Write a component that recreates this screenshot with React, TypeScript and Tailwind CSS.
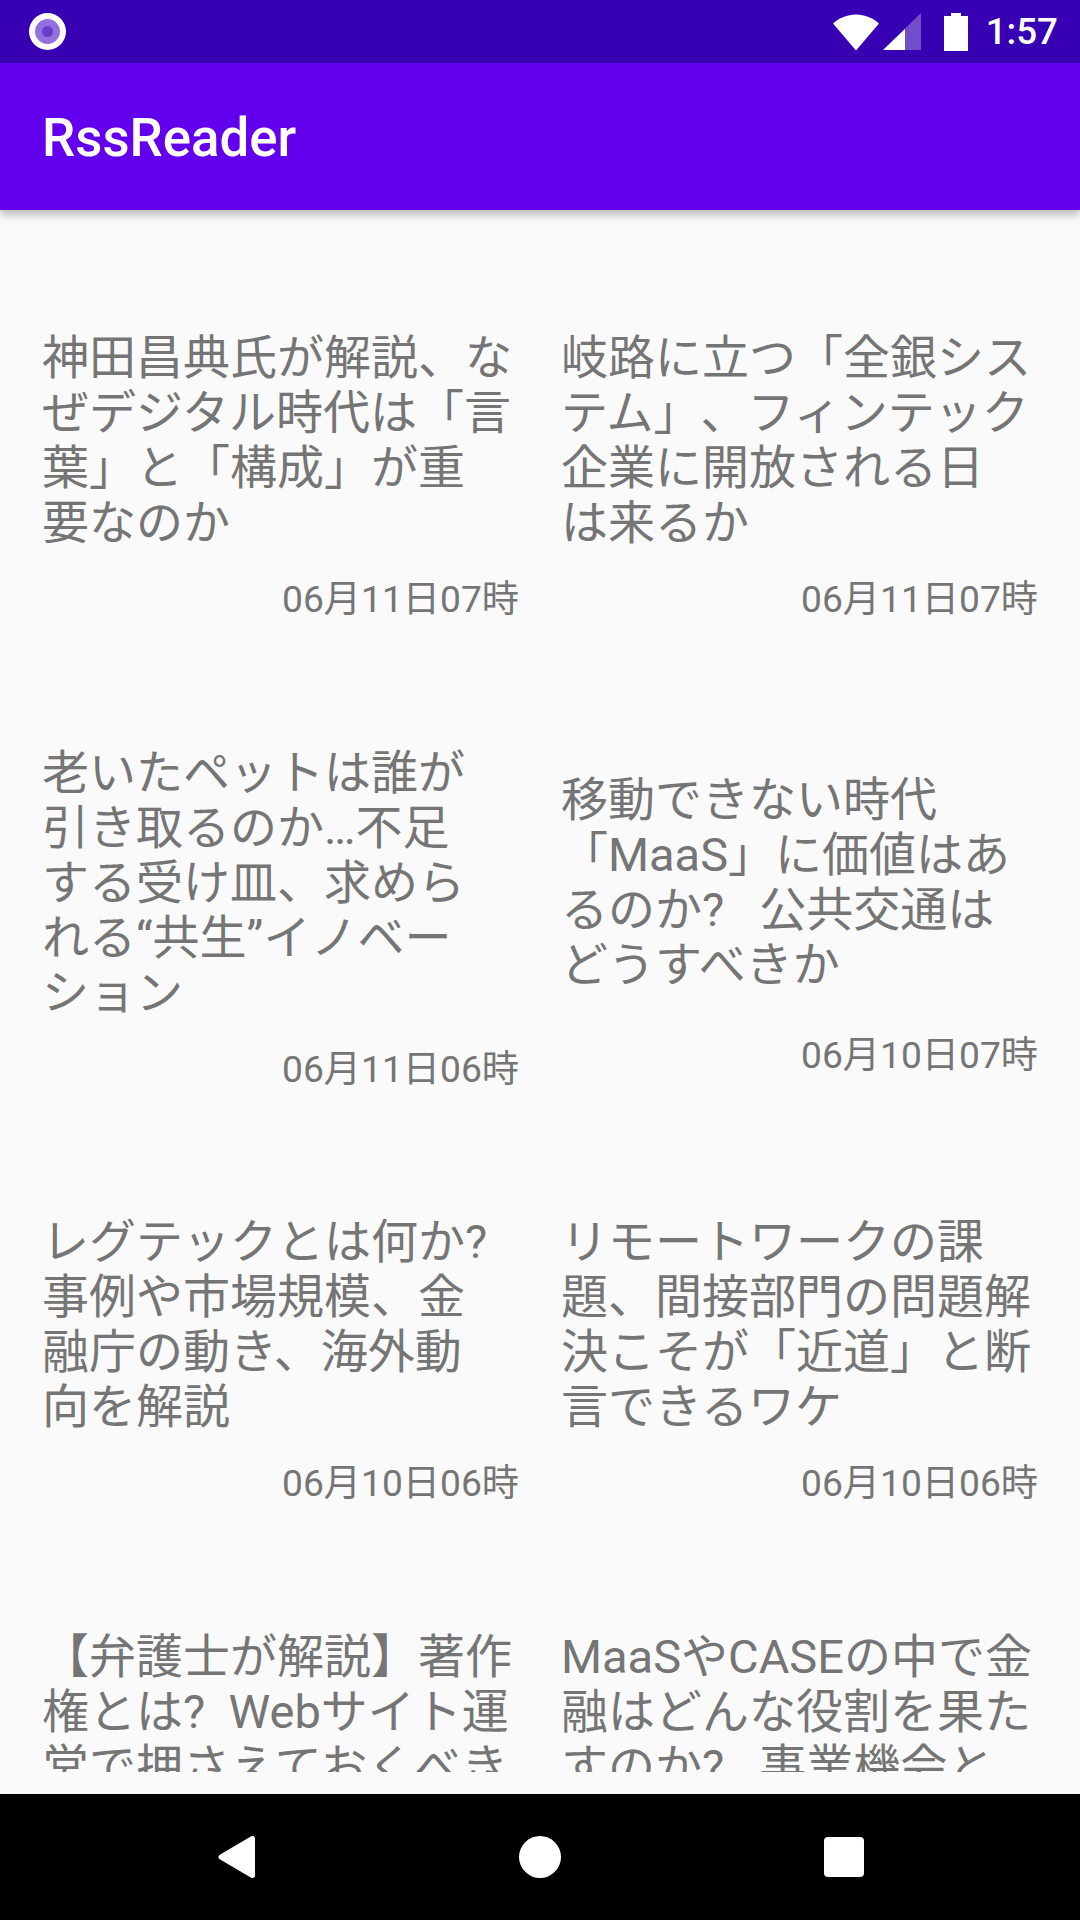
// App.tsx
import React from "react";

const articles = [
  { lines: ["神田昌典氏が解説、な", "ぜデジタル時代は「言", "葉」と「構成」が重", "要なのか"], date: "06月11日07時" },
  { lines: ["岐路に立つ「全銀シス", "テム」、フィンテック", "企業に開放される日", "は来るか"], date: "06月11日07時" },
  { lines: ["老いたペットは誰が", "引き取るのか…不足", "する受け皿、求めら", "れる“共生”イノベー", "ション"], date: "06月11日06時" },
  { lines: ["移動できない時代", "「MaaS」に価値はあ", "るのか?   公共交通は", "どうすべきか"], date: "06月10日07時", wideGap: true },
  { lines: ["レグテックとは何か?", "事例や市場規模、金", "融庁の動き、海外動", "向を解説"], date: "06月10日06時" },
  { lines: ["リモートワークの課", "題、間接部門の問題解", "決こそが「近道」と断", "言できるワケ"], date: "06月10日06時" },
  { lines: ["【弁護士が解説】著作", "権とは?  Webサイト運", "営で押さえておくべき", "ポイント"], date: "06月10日06時" },
  { lines: ["MaaSやCASEの中で金", "融はどんな役割を果た", "すのか?   事業機会と", "課題"], date: "06月10日06時" },
];

function ArticleCard({ lines, date, wideGap }: { lines: string[]; date: string; wideGap?: boolean }) {
  return (
    <div className="px-[21px] py-[61.75px]">
      <p className="whitespace-pre text-[47px] leading-[55px] text-[#757575] [text-spacing-trim:space-all]">
        {lines.map((line) => (
          <span key={line} className="block">
            {line}
          </span>
        ))}
      </p>
      <p
        className={`text-right text-[37.2px] leading-[43px] text-[#757575] ${
          wideGap ? "mt-[42px] mb-[-14px]" : "mt-[28px]"
        }`}
      >
        {date}
      </p>
    </div>
  );
}

export default function App() {
  return (
    <div className="flex h-[1920px] w-[1080px] flex-col overflow-hidden bg-[#fafafa] font-['Roboto','Noto_Sans_CJK_JP',sans-serif]">
      {/* status bar */}
      <div className="flex h-[63px] shrink-0 items-center justify-between bg-[#3700b3] pl-[29px] pr-[22px]">
        <div className="flex h-[37px] w-[37px] items-center justify-center rounded-full bg-white">
          <div className="flex h-[25px] w-[25px] items-center justify-center rounded-full bg-[#9370db]">
            <div className="h-[11px] w-[11px] rounded-full bg-[#6a3bcb]" />
          </div>
        </div>
        <div className="flex items-center">
          <svg width="48" height="38" viewBox="0 0 48 38">
            <path d="M24 37.500 1 10.500C7 5 15 1.500 24 1.500s17 3.500 23 9z" fill="#fff" />
          </svg>
          <svg width="38" height="38" viewBox="0 0 38 38" className="ml-[3px]">
            <path d="M38 0v37H0z" fill="#fff" fillOpacity="0.3" />
            <path d="M22 16v21H0z" fill="#fff" />
          </svg>
          <svg width="24" height="38" viewBox="0 0 24 38" className="ml-[23px]">
            <path d="M7 0h10v3h7v35H0V3h7z" fill="#fff" />
          </svg>
          <span className="ml-[18px] text-[36.75px] font-medium leading-[43px] text-white">1:57</span>
        </div>
      </div>

      {/* app bar */}
      <div className="z-10 flex h-[147px] shrink-0 items-center bg-[#6200ee] pl-[42px] pt-[3px] shadow-[0_5px_8px_rgba(0,0,0,0.25)]">
        <h1 className="text-[52.8px] font-medium leading-none text-white">RssReader</h1>
      </div>

      {/* article list */}
      <div className="mb-[22px] min-h-0 flex-1 overflow-hidden">
        <div className="grid grid-cols-2 items-center px-[21px] pt-[58.25px]">
          {articles.map((article) => (
            <ArticleCard key={article.lines[0]} lines={article.lines} date={article.date} wideGap={article.wideGap} />
          ))}
        </div>
      </div>

      {/* nav bar */}
      <div className="flex h-[126px] shrink-0 items-center justify-center bg-black">
        <div className="flex w-[304px] justify-center">
          <svg width="37" height="42" viewBox="0 0 37 42">
            <path d="M3 21 34.500 2.500v37z" fill="#fff" stroke="#fff" strokeWidth="5" strokeLinejoin="round" />
          </svg>
        </div>
        <div className="flex w-[304px] justify-center">
          <div className="h-[42px] w-[42px] rounded-full bg-white" />
        </div>
        <div className="flex w-[304px] justify-center">
          <div className="h-[40px] w-[40px] rounded-[4px] bg-white" />
        </div>
      </div>
    </div>
  );
}
